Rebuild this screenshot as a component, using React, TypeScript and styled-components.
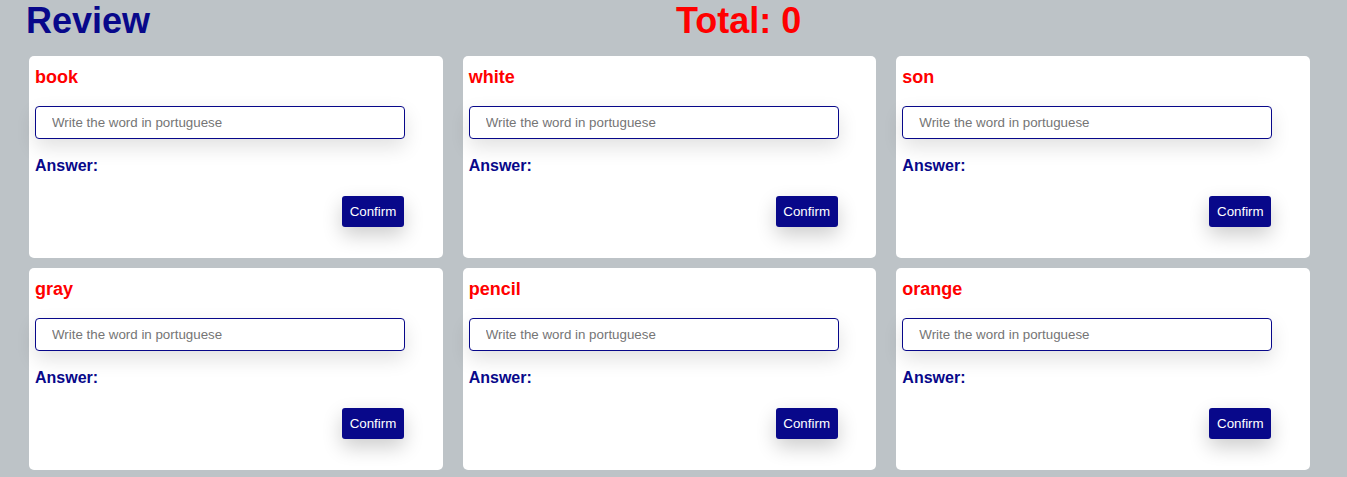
import React from "react";
import styled, { createGlobalStyle } from "styled-components";

const GlobalStyle = createGlobalStyle`
  html, body {
    margin: 0;
    padding: 0;
    background: #bdc3c7;
    font-family: "Liberation Sans", Arial, sans-serif;
  }
`;

const Page = styled.div`
  display: flex;
  flex-direction: column;
`;

const Header = styled.header`
  display: grid;
  grid-template-columns: 650px auto;
  padding-left: 26px;
  height: 56px;
  align-items: start;
`;

const Title = styled.h1`
  margin: 0;
  font-size: 36px;
  line-height: 41px;
  font-weight: bold;
  color: #08088a;
`;

const Total = styled.h1`
  margin: 0;
  font-size: 36px;
  line-height: 41px;
  font-weight: bold;
  color: #ff0000;
`;

const Grid = styled.main`
  display: grid;
  grid-template-columns: repeat(3, 1fr);
  column-gap: 20px;
  row-gap: 10px;
  width: 1281px;
  margin-left: 29px;
`;

const Card = styled.section`
  background: #ffffff;
  border-radius: 5px;
  height: 202px;
  box-sizing: border-box;
  padding: 11px 6px 0 6px;
  display: flex;
  flex-direction: column;
  align-items: flex-start;
`;

const Word = styled.h3`
  margin: 0;
  font-size: 18px;
  line-height: 21px;
  font-weight: bold;
  color: #ff0000;
`;

const Field = styled.input`
  margin-top: 18px;
  width: 370px;
  height: 33px;
  box-sizing: border-box;
  border: 1px solid #08088a;
  border-radius: 4px;
  padding: 0 16px;
  font-family: "Liberation Sans", Arial, sans-serif;
  font-size: 13.333px;
  color: #333;
  background: #fff;
  outline: none;
  box-shadow: 0 8px 20px rgba(0, 0, 0, 0.12);
  &::placeholder {
    color: #757575;
  }
`;

const AnswerLabel = styled.p`
  margin: 18px 0 0 0;
  font-size: 16px;
  line-height: 18px;
  font-weight: bold;
  color: #08088a;
`;

const Actions = styled.div`
  width: 369px;
  display: flex;
  justify-content: flex-end;
  margin-top: 21px;
`;

const ConfirmButton = styled.button`
  height: 31px;
  width: 62px;
  padding: 0;
  border: none;
  border-radius: 3px;
  background: #08088a;
  color: #ffffff;
  font-family: "Liberation Sans", Arial, sans-serif;
  font-size: 13.333px;
  font-weight: normal;
  cursor: pointer;
  box-shadow: 0 8px 20px rgba(0, 0, 0, 0.2);
`;

const words = ["book", "white", "son", "gray", "pencil", "orange"];

export default function App() {
  return (
    <>
      <GlobalStyle />
      <Page>
        <Header>
          <Title>Review</Title>
          <Total>Total: 0</Total>
        </Header>
        <Grid>
          {words.map((w) => (
            <Card key={w}>
              <Word>{w}</Word>
              <Field placeholder="Write the word in portuguese" />
              <AnswerLabel>Answer:</AnswerLabel>
              <Actions>
                <ConfirmButton>Confirm</ConfirmButton>
              </Actions>
            </Card>
          ))}
        </Grid>
      </Page>
    </>
  );
}
